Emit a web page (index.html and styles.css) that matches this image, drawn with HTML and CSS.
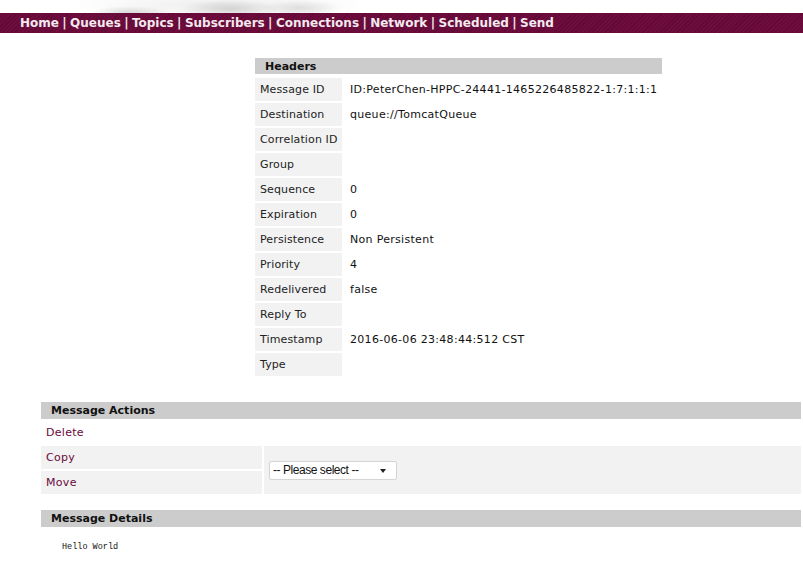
FILE: index.html
```html
<!DOCTYPE html>
<html>
<head>
<meta charset="utf-8">
<title>Browse Message</title>
<link rel="stylesheet" href="styles.css">
</head>
<body>
<div class="banner"></div>
<div class="nav">
  <a href="#">Home</a> | <a href="#">Queues</a> | <a href="#">Topics</a> | <a href="#">Subscribers</a> | <a href="#">Connections</a> | <a href="#">Network</a> | <a href="#">Scheduled</a> | <a href="#">Send</a>
</div>

<table class="headers">
  <thead>
    <tr><th colspan="2">Headers</th></tr>
  </thead>
  <tbody>
    <tr><td class="label">Message ID</td><td class="value">ID:PeterChen-HPPC-24441-1465226485822-1:7:1:1:1</td></tr>
    <tr><td class="label">Destination</td><td class="value">queue://TomcatQueue</td></tr>
    <tr><td class="label">Correlation ID</td><td class="value"></td></tr>
    <tr><td class="label">Group</td><td class="value"></td></tr>
    <tr><td class="label">Sequence</td><td class="value">0</td></tr>
    <tr><td class="label">Expiration</td><td class="value">0</td></tr>
    <tr><td class="label">Persistence</td><td class="value">Non Persistent</td></tr>
    <tr><td class="label">Priority</td><td class="value">4</td></tr>
    <tr><td class="label">Redelivered</td><td class="value">false</td></tr>
    <tr><td class="label">Reply To</td><td class="value"></td></tr>
    <tr><td class="label">Timestamp</td><td class="value">2016-06-06 23:48:44:512 CST</td></tr>
    <tr><td class="label">Type</td><td class="value"></td></tr>
  </tbody>
</table>

<table class="actions">
  <thead>
    <tr><th colspan="2">Message Actions</th></tr>
  </thead>
  <tbody>
    <tr><td class="act plain" colspan="2"><a href="#">Delete</a></td></tr>
    <tr>
      <td class="act"><a href="#">Copy</a></td>
      <td class="pick" rowspan="2">
        <span class="select-wrap">
          <select class="select">
            <option>-- Please select --</option>
          </select>
        </span>
      </td>
    </tr>
    <tr><td class="act"><a href="#">Move</a></td></tr>
  </tbody>
</table>

<table class="details">
  <thead>
    <tr><th>Message Details</th></tr>
  </thead>
  <tbody>
    <tr><td class="body-cell"><pre class="message">Hello World</pre></td></tr>
  </tbody>
</table>
</body>
</html>
```

FILE: styles.css
```css
html, body {
  margin: 0;
  padding: 0;
  background: #fff;
  overflow: hidden;
}

body {
  font-family: "DejaVu Sans", Verdana, sans-serif;
  font-size: 11px;
  color: #111;
}

.banner {
  height: 13px;
  background:
    radial-gradient(ellipse 40px 7px at 130px 13px, rgba(170,170,170,0.45), rgba(200,200,200,0) 100%),
    radial-gradient(ellipse 50px 9px at 230px 9px, rgba(175,175,175,0.45), rgba(210,210,210,0) 100%),
    radial-gradient(ellipse 40px 8px at 300px 8px, rgba(185,185,185,0.4), rgba(220,220,220,0) 100%),
    radial-gradient(ellipse 150px 15px at 220px 5px, rgba(222,222,222,0.55), rgba(240,240,240,0) 100%);
}

.nav {
  height: 20px;
  line-height: 20px;
  padding-left: 20px;
  color: #f3e9ef;
  font-weight: bold;
  font-size: 12px;
  word-spacing: -0.8px;
  white-space: nowrap;
  background-color: #6e0c3d;
  background-image: repeating-linear-gradient(
    -45deg,
    #6e0c3d 0px,
    #6e0c3d 2px,
    #5f0934 2px,
    #5f0934 3px
  );
}

.nav a {
  color: #f3e9ef;
  text-decoration: none;
}

table {
  border-collapse: separate;
  border-spacing: 2px;
}

th {
  background: #cccccc;
  text-align: left;
  font-weight: bold;
  font-size: 11px;
  height: 17px;
  padding: 0 0 0 10px;
  color: #111;
}

td {
  padding: 0;
  height: 23px;
  font-size: 11px;
  letter-spacing: 0.3px;
}

.headers {
  margin: 23px 0 0 253px;
  width: 411px;
}

.headers th {
  height: 16px;
  border-bottom: 2px solid #fff;
}

.headers .label {
  width: 82px;
  background: #f2f2f2;
  padding-left: 5px;
  color: #222;
  white-space: nowrap;
  letter-spacing: 0.12px;
}

.headers .value {
  padding-left: 6px;
  color: #111;
  white-space: nowrap;
}

.actions {
  margin: 22px 0 0 39px;
  width: 764px;
}

.actions .act {
  width: 216px;
  padding-left: 5px;
  background: #f2f2f2;
}

.actions .act.plain {
  background: transparent;
}

.actions a {
  color: #6a0a3a;
  text-decoration: none;
}

.actions .pick {
  background: #f2f2f2;
  padding-left: 5px;
  vertical-align: middle;
  letter-spacing: 0;
}

.select-wrap {
  position: relative;
  display: inline-block;
}

.select {
  appearance: none;
  -webkit-appearance: none;
  width: 128px;
  height: 19px;
  margin: 0;
  padding: 0 0 0 3px;
  border: 1px solid #d4d4d4;
  border-radius: 2px;
  background: #fff;
  font-family: "Liberation Sans", Arial, sans-serif;
  font-size: 12px;
  letter-spacing: -0.45px;
  color: #111;
  display: block;
}

.select-wrap::after {
  content: "";
  position: absolute;
  right: 11px;
  top: 8px;
  border-left: 3.5px solid transparent;
  border-right: 3.5px solid transparent;
  border-top: 4px solid #222;
  pointer-events: none;
}

.details {
  margin: 12px 0 0 39px;
  width: 764px;
}

.details .body-cell {
  padding: 0;
  height: auto;
  letter-spacing: 0;
}

.message {
  margin: 13px 0 0 21px;
  font-family: "Liberation Mono", "Courier New", monospace;
  font-size: 8.5px;
  color: #111;
}
```
